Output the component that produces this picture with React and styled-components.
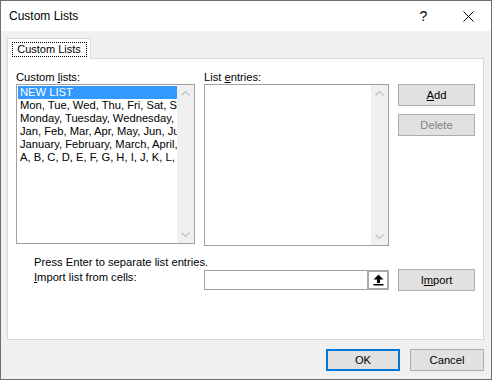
import React from 'react'
import styled, { createGlobalStyle } from 'styled-components'

const GlobalStyle = createGlobalStyle`
  html, body { margin:0; padding:0; background:#fff; }
  body {
    font-family: "Liberation Sans", Arial, sans-serif;
    font-size: 11.2px;
    color: #000;
  }
`

const LISTS = [
  'NEW LIST',
  'Mon, Tue, Wed, Thu, Fri, Sat, Sun',
  'Monday, Tuesday, Wednesday, Thursday, Friday, Saturday, Sunday',
  'Jan, Feb, Mar, Apr, May, Jun, Jul, Aug, Sep, Oct, Nov, Dec',
  'January, February, March, April, May, June, July, August, September, October, November, December',
  'A, B, C, D, E, F, G, H, I, J, K, L, M, N, O, P, Q, R, S, T, U, V, W, X, Y, Z',
]

function Chevron({ down }) {
  return (
    <svg width="9" height="5" viewBox="0 0 9 5">
      <polyline
        points={down ? '0.5,0.5 4.5,4.5 8.5,0.5' : '0.5,4.5 4.5,0.5 8.5,4.5'}
        fill="none"
        stroke="#c4c4c4"
        strokeWidth="1.3"
      />
    </svg>
  )
}

function ScrollBar() {
  return (
    <Scroll>
      <ScrollArrow><Chevron /></ScrollArrow>
      <ScrollArrow><Chevron down /></ScrollArrow>
    </Scroll>
  )
}

function App() {
  return (
    <>
      <GlobalStyle />
      <Window>
        <TitleBar>
          <Title>Custom Lists</Title>
          <CaptionButton>
            <Help>?</Help>
          </CaptionButton>
          <CaptionButton>
            <svg width="11" height="11" viewBox="0 0 11 11">
              <path d="M0.5 0.5 L10.5 10.5 M10.5 0.5 L0.5 10.5" stroke="#000" strokeWidth="1" />
            </svg>
          </CaptionButton>
        </TitleBar>

        <Body>
          <TabStrip>
            <Tab>
              <Focus>Custom Lists</Focus>
            </Tab>
          </TabStrip>

          <Panel>
            <Content>
              <Label>Custom <U>l</U>ists:</Label>
              <Label>List <U>e</U>ntries:</Label>
              <span />

              <ListBox $h={160}>
                <Items>
                  {LISTS.map((item, i) => (
                    <Item key={item} $selected={i === 0}>{item}</Item>
                  ))}
                </Items>
                <ScrollBar />
              </ListBox>
              <ListBox $h={162}>
                <Items />
                <ScrollBar />
              </ListBox>
              <ButtonColumn>
                <Button $w={77}><U>A</U>dd</Button>
                <Button $w={77} $disabled>Delete</Button>
              </ButtonColumn>

              <Hint>Press Enter to separate list entries.</Hint>

              <ImportLabel><U>I</U>mport list from cells:</ImportLabel>
              <RefInput>
                <Field />
                <CollapseButton>
                  <svg width="11" height="12" viewBox="0 0 11 12">
                    <path d="M5.5 0.5 L10.5 5.5 L7 5.5 L7 9 L4 9 L4 5.5 L0.5 5.5 Z" fill="#000" />
                    <rect x="0.5" y="10" width="10" height="1.5" fill="#000" />
                  </svg>
                </CollapseButton>
              </RefInput>
              <Button $w={77}>I<U>m</U>port</Button>
            </Content>
          </Panel>

          <Footer>
            <Button $w={74} $primary>OK</Button>
            <Button $w={74}>Cancel</Button>
          </Footer>
        </Body>
      </Window>
    </>
  )
}

export default App

const Window = styled.div`
  width:492px;
  height:380px;
  box-sizing:border-box;
  border:1px solid #6f6f6f;
  background:#f0f0f0;
  display:flex;
  flex-direction:column;
`

const TitleBar = styled.div`
  height:30px;
  background:#fff;
  display:flex;
  align-items:center;
  padding-left:8px;
`

const Title = styled.div`
  flex:1;
  font-size:12px;
`

const CaptionButton = styled.div`
  width:45px;
  height:30px;
  display:flex;
  align-items:center;
  justify-content:center;
`

const Help = styled.span`
  font-size:14px;
  line-height:14px;
`

const Body = styled.div`
  flex:1;
  display:flex;
  flex-direction:column;
  padding:7px 7px 0 6px;
`

const TabStrip = styled.div`
  display:flex;
  height:20px;
`

const Tab = styled.div`
  position:relative;
  width:84px;
  height:21px;
  box-sizing:border-box;
  border:1px solid #d9d9d9;
  border-bottom:none;
  background:#fff;
  display:flex;
  justify-content:center;
  padding-top:3px;
`

const Focus = styled.div`
  width:75px;
  height:15px;
  box-sizing:border-box;
  border:1px dotted #000;
  font-size:11px;
  line-height:13px;
  text-align:center;
`

const Panel = styled.div`
  height:282px;
  box-sizing:border-box;
  border:1px solid #d9d9d9;
  background:#fff;
  padding:11px 0 0 8px;
`

const Content = styled.div`
  display:grid;
  grid-template-columns:179px 185px 77px;
  column-gap:9px;
  align-items:start;
`

const Label = styled.div`
  line-height:14px;
`

const U = styled.span`
  text-decoration:underline;
`

const ListBox = styled.div`
  height:${p => p.$h}px;
  box-sizing:border-box;
  border:1px solid #a0a0a0;
  background:#fff;
  display:flex;
`

const Items = styled.div`
  flex:1;
  min-width:0;
  padding:1px 0 0 1px;
  overflow:hidden;
`

const Item = styled.div`
  height:13px;
  line-height:13px;
  padding-left:2px;
  white-space:nowrap;
  overflow:hidden;
  background:${p => (p.$selected ? '#3399ff' : 'transparent')};
  color:${p => (p.$selected ? '#fff' : '#000')};
`

const Scroll = styled.div`
  width:17px;
  background:#f0f0f0;
  display:flex;
  flex-direction:column;
  justify-content:space-between;
`

const ScrollArrow = styled.div`
  height:17px;
  display:flex;
  align-items:center;
  justify-content:center;
`

const ButtonColumn = styled.div`
  display:flex;
  flex-direction:column;
  gap:8px;
`

const Button = styled.div`
  width:${p => p.$w}px;
  height:22px;
  box-sizing:border-box;
  background:#e1e1e1;
  border:${p => (p.$primary ? '2px solid #0078d7' : '1px solid #adadad')};
  color:${p => (p.$disabled ? '#838383' : '#000')};
  display:flex;
  align-items:center;
  justify-content:center;
`

const Hint = styled.div`
  grid-column:1 / -1;
  margin:9px 0 0 18px;
  line-height:14px;
`

const ImportLabel = styled.div`
  margin:1px 0 0 18px;
  line-height:14px;
`

const RefInput = styled.div`
  margin-top:1px;
  height:20px;
  box-sizing:border-box;
  border:1px solid #a0a0a0;
  display:flex;
`

const Field = styled.div`
  flex:1;
`

const CollapseButton = styled.div`
  width:22px;
  margin:-1px -1px -1px 0;
  box-sizing:border-box;
  border:2px solid #a9a9a9;
  background:#fff;
  display:flex;
  align-items:center;
  justify-content:center;
`

const Footer = styled.div`
  flex:1;
  display:flex;
  justify-content:flex-end;
  gap:10px;
  padding-top:9px;
`
